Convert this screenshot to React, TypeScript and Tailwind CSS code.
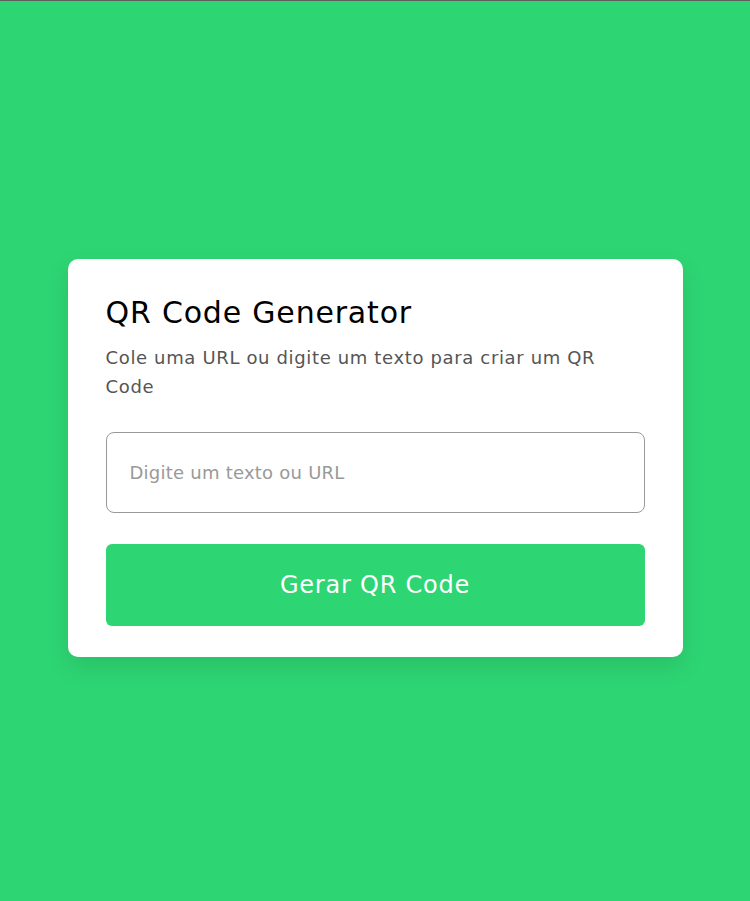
export default function App() {
  return (
    <div
      className="min-h-screen border-t border-[#5f5f5f] bg-[#2ed573] pt-[258px]"
      style={{ fontFamily: '"DejaVu Sans", "Noto Sans", sans-serif' }}
    >
      <div className="mx-auto w-[615px] rounded-[10px] bg-white px-[38px] pt-[31px] pb-[31px] shadow-[0_10px_25px_rgba(0,0,0,0.1)]">
        <h1 className="text-[30px] font-normal leading-[45px] tracking-[0.027em] text-black">QR Code Generator</h1>
        <p className="mt-[8px] text-[18px] leading-[29px] tracking-[0.036em] text-[#555]">
          Cole uma URL ou digite um texto para criar um QR Code
        </p>
        <input
          type="text"
          placeholder="Digite um texto ou URL"
          className="mt-[31px] block h-[81px] w-full rounded-[8px] border border-[#999] px-[23px] text-[18px] tracking-[0.013em] text-[#333] outline-none placeholder:text-[#999]"
        />
        <button className="mt-[31px] block h-[82px] w-full rounded-[6px] bg-[#2ed573] text-[24px] tracking-[0.032em] text-white">
          Gerar QR Code
        </button>
      </div>
    </div>
  );
}
